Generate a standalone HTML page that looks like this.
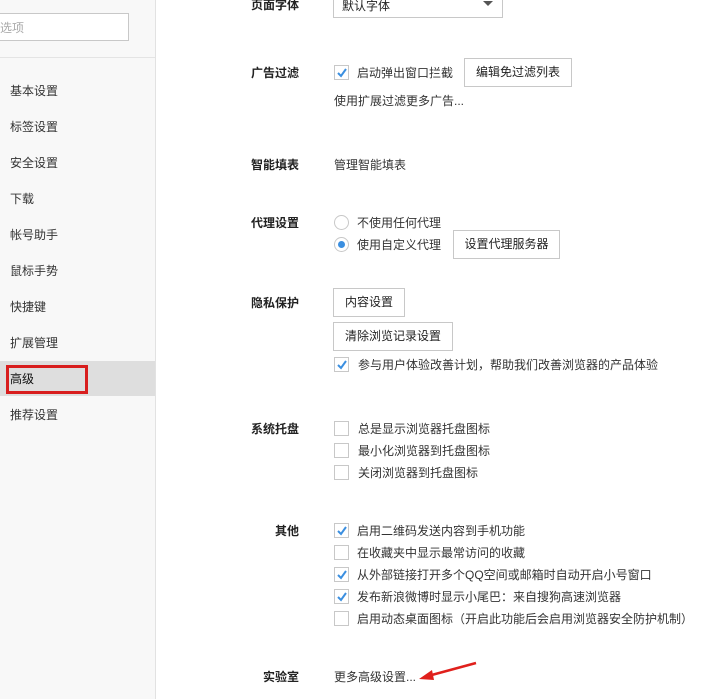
<!DOCTYPE html>
<html><head><meta charset="utf-8">
<style>
*{margin:0;padding:0;box-sizing:border-box}
body{width:723px;height:699px;overflow:hidden;background:#fff;font-family:"Liberation Sans","Noto Sans CJK SC","WenQuanYi Zen Hei",sans-serif;font-size:12px;color:#333;position:relative}
.a{position:absolute;white-space:nowrap}
#side{position:absolute;left:0;top:0;width:156px;height:699px;background:#f8f8f8;border-right:1px solid #e2e2e2}
.nav{position:absolute;left:10px;font-size:12px;color:#333}
.lbl{position:absolute;width:70px;left:229px;text-align:right;font-weight:bold;color:#222}
.cb{position:absolute;left:334px;width:15px;height:15px;border:1px solid #c8c8c8;background:#fff}
.cb svg{position:absolute;left:1px;top:1px}
.btn{position:absolute;border:1px solid #c8c8c8;background:#fff;text-align:center;color:#222}
.rd{position:absolute;left:334px;width:15px;height:15px;border:1px solid #c8c8c8;border-radius:50%;background:#fff}
</style></head><body>
<div id="side">
  <div class="a" style="left:-1px;top:13px;width:130px;height:28px;border:1px solid #c8c8c8;background:#fff;color:#aaa;padding:5px 0 0 0">选项</div>
  <div class="a" style="left:0;top:57px;width:155px;border-top:1px solid #e4e4e4"></div>
  <div class="nav" style="top:82px">基本设置</div>
  <div class="nav" style="top:118px">标签设置</div>
  <div class="nav" style="top:154px">安全设置</div>
  <div class="nav" style="top:190px">下载</div>
  <div class="nav" style="top:226px">帐号助手</div>
  <div class="nav" style="top:262px">鼠标手势</div>
  <div class="nav" style="top:298px">快捷键</div>
  <div class="nav" style="top:334px">扩展管理</div>
  <div class="a" style="left:0;top:361px;width:155px;height:35px;background:#dedede"></div>
  <div class="a" style="left:6px;top:365px;width:82px;height:29px;border:3px solid #d81e1e"></div>
  <div class="nav" style="top:370px;color:#111">高级</div>
  <div class="nav" style="top:406px">推荐设置</div>
</div>

<div class="lbl" style="top:-4px">页面字体</div>
<div class="a" style="left:333px;top:-12px;width:170px;height:30px;border:1px solid #c8c8c8;padding:8px 0 0 8px;color:#222">默认字体</div>
<svg class="a" style="left:483px;top:1px" width="10" height="6"><path d="M0 0L10 0L5 5Z" fill="#555"/></svg>

<div class="lbl" style="top:64px">广告过滤</div>
<div class="cb" style="top:65px"><svg width="12" height="12"><path d="M2 6L5 9L10 2" stroke="#3b8fe0" stroke-width="2" fill="none"/></svg></div>
<div class="a" style="left:357px;top:64px">启动弹出窗口拦截</div>
<div class="btn" style="left:464px;top:58px;width:108px;height:29px;line-height:27px">编辑免过滤列表</div>
<div class="a" style="left:334px;top:92px">使用扩展过滤更多广告...</div>

<div class="lbl" style="top:156px">智能填表</div>
<div class="a" style="left:334px;top:156px">管理智能填表</div>

<div class="lbl" style="top:214px">代理设置</div>
<div class="rd" style="top:215px"></div>
<div class="a" style="left:357px;top:214px">不使用任何代理</div>
<div class="rd" style="top:237px"><div style="position:absolute;left:3px;top:3px;width:7px;height:7px;border-radius:50%;background:#3b8fe0"></div></div>
<div class="a" style="left:357px;top:236px">使用自定义代理</div>
<div class="btn" style="left:453px;top:230px;width:107px;height:29px;line-height:27px">设置代理服务器</div>

<div class="lbl" style="top:294px">隐私保护</div>
<div class="btn" style="left:333px;top:288px;width:72px;height:29px;line-height:27px">内容设置</div>
<div class="btn" style="left:333px;top:322px;width:120px;height:29px;line-height:27px">清除浏览记录设置</div>
<div class="cb" style="top:357px"><svg width="12" height="12"><path d="M2 6L5 9L10 2" stroke="#3b8fe0" stroke-width="2" fill="none"/></svg></div>
<div class="a" style="left:358px;top:356px">参与用户体验改善计划，帮助我们改善浏览器的产品体验</div>

<div class="lbl" style="top:420px">系统托盘</div>
<div class="cb" style="top:421px"></div><div class="a" style="left:358px;top:420px">总是显示浏览器托盘图标</div>
<div class="cb" style="top:443px"></div><div class="a" style="left:358px;top:442px">最小化浏览器到托盘图标</div>
<div class="cb" style="top:465px"></div><div class="a" style="left:358px;top:464px">关闭浏览器到托盘图标</div>

<div class="lbl" style="top:522px">其他</div>
<div class="cb" style="top:523px"><svg width="12" height="12"><path d="M2 6L5 9L10 2" stroke="#3b8fe0" stroke-width="2" fill="none"/></svg></div><div class="a" style="left:357px;top:522px">启用二维码发送内容到手机功能</div>
<div class="cb" style="top:545px"></div><div class="a" style="left:357px;top:544px">在收藏夹中显示最常访问的收藏</div>
<div class="cb" style="top:567px"><svg width="12" height="12"><path d="M2 6L5 9L10 2" stroke="#3b8fe0" stroke-width="2" fill="none"/></svg></div><div class="a" style="left:357px;top:566px">从外部链接打开多个QQ空间或邮箱时自动开启小号窗口</div>
<div class="cb" style="top:589px"><svg width="12" height="12"><path d="M2 6L5 9L10 2" stroke="#3b8fe0" stroke-width="2" fill="none"/></svg></div><div class="a" style="left:357px;top:588px">发布新浪微博时显示小尾巴：来自搜狗高速浏览器</div>
<div class="cb" style="top:611px"></div><div class="a" style="left:357px;top:610px">启用动态桌面图标（开启此功能后会启用浏览器安全防护机制）</div>

<div class="lbl" style="top:668px">实验室</div>
<div class="a" style="left:334px;top:668px">更多高级设置...</div>
<svg class="a" style="left:416px;top:660px" width="64" height="22"><path d="M60 3L12 16" stroke="#e0201c" stroke-width="2.5"/><path d="M3 19L16 10L18 20Z" fill="#e0201c"/></svg>
</body></html>
